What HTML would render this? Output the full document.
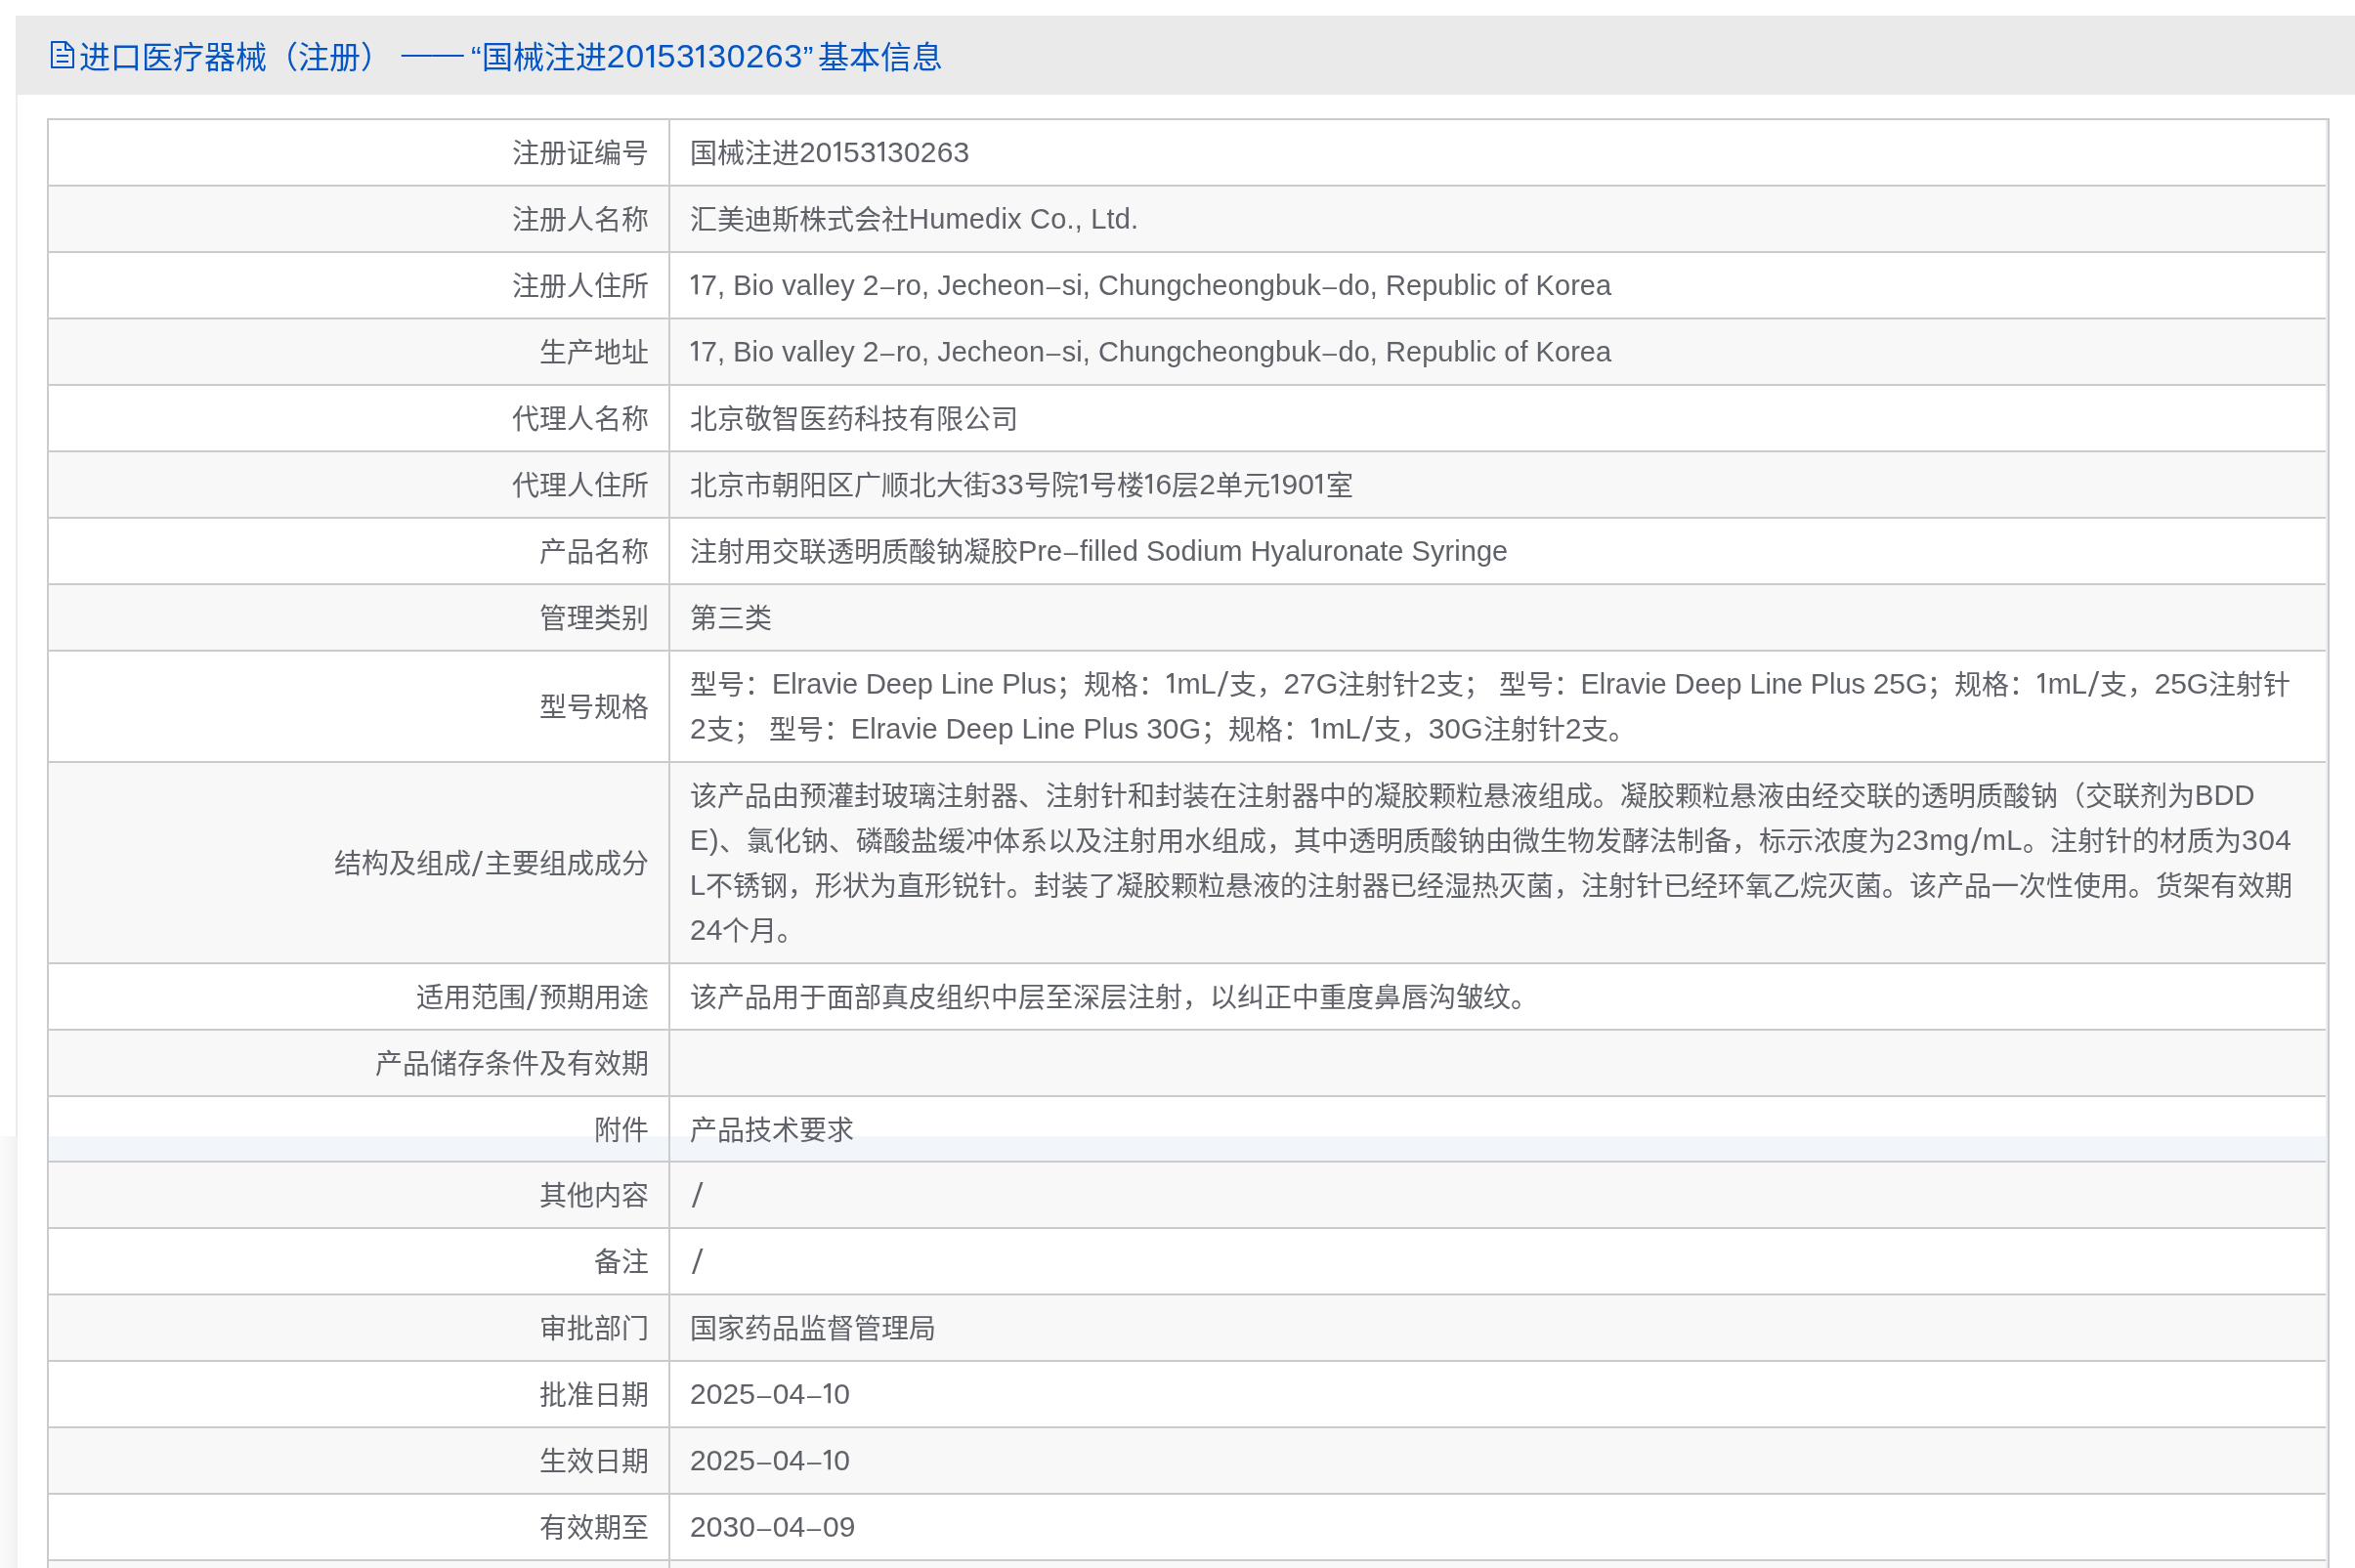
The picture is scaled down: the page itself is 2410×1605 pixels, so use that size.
<!DOCTYPE html><html lang="zh-CN"><head><meta charset="utf-8"><title>基本信息</title><style>
*{box-sizing:border-box;margin:0;padding:0}
html,body{width:2410px;height:1605px;overflow:hidden;background:#fff}
body{font-family:"Liberation Sans",sans-serif;color:#5f6269;font-size:28px;line-height:46px;position:relative}
.w{position:relative;width:2410px;height:1605px;overflow:hidden}
i{font-style:normal;position:relative;top:-1px;line-height:0}
b{display:inline-block;width:1em;font-weight:normal;text-align:justify;text-align-last:justify;white-space:nowrap;vertical-align:baseline}
.n{font-size:30px;top:-1px;letter-spacing:var(--r,0px)}.o{width:11.3px;height:20.2px;fill:currentColor;position:relative;top:-1.4px;vertical-align:baseline}.sl{width:12.9px;height:26.5px;vertical-align:-3.15px;position:relative;top:-.8px;fill:currentColor}.da{font-size:26px;top:-1.5px;margin:0 1.6px}.e{font-size:29px;top:-1px;letter-spacing:calc(.05px + var(--r,0px))}
.panel{position:absolute;left:16px;top:16px;width:2400px;height:1147px;border-left:2px solid #ececec}
.shade{position:absolute;left:0;top:1163px;width:18px;height:442px;background:linear-gradient(90deg,#fbfbfb 0,#f7f7f7 50%,#f2f2f2 88%,#efefef 100%)}
.hd{position:absolute;left:16px;top:16px;width:2394px;height:81px;background:#eaeaea;border-bottom:2px solid #e8ecf1}
.ico{position:absolute;left:52px;top:42px;width:24px;height:28px}
.tt{will-change:transform;position:absolute;left:81px;top:36px;height:46px;line-height:46px;font-size:32px;color:#0556c4;white-space:nowrap}
.tt .n{font-size:34px;letter-spacing:.55px}.tt .o{width:12.9px;height:23.1px}
.q{display:inline-block}.q1{width:18px;text-align:right}.q2{width:15px;text-align:left}
.tb{position:absolute;left:48px;top:121px;width:2336px;height:1484px;border-left:2px solid #cbcbcb;border-right:2px solid #cbcbcb}
.r{position:absolute;left:48px;width:2336px;border-top:2px solid #cbcbcb;will-change:transform}
.r.s{background:#f8f8f8}
.r.hv{background:linear-gradient(180deg,#fff 0,#fff 40px,#f2f6fa 40px)}
.l{position:absolute;left:2px;top:0;bottom:0;width:634px;display:flex;align-items:center;justify-content:flex-end;padding:4px 20.3px 0 0;white-space:nowrap}
.v{position:absolute;left:636px;top:0;bottom:0;width:1698px;border-left:2px solid #cbcbcb;padding:12px 0 8px 20px;white-space:nowrap}
.v div{height:46px}
.big{position:absolute;left:21.5px;top:19.6px}
.l .sl{margin:0 .6px}
.vl{position:absolute;left:684px;top:121px;width:2px;height:1484px;background:#cbcbcb}
.rl{position:absolute;left:2380px;top:123px;width:2px;height:1482px;background:#eceef6}
</style></head><body><div class="w">
<div class="panel"></div><div class="shade"></div><div class="hd"></div>
<svg class="ico" viewBox="0 0 24 28" fill="none" stroke="#0556c4" stroke-width="2" stroke-linejoin="round"><path d="M1 1H15.4L23 8.6V27H1Z"/><path d="M15 1V9H23"/><path d="M6 9H11M6 15H18M6 21H18"/></svg>
<div class="tt"><b style="width:10em">进口医疗器械（注册）</b><i class="e" style="font-size:33px;letter-spacing:.55px"> </i><span style="position:relative;top:-5px"><b style="width:2em">——</b></span><span class="q q1">“</span><b style="width:4em">国械注进</b><i class="n">20</i><svg class="o" viewBox="0 0 11.3 20.2"><path d="M5.6 0H8V20.2H5.35V3.2L1.6 5.7L.7 3.5Z"/></svg><i class="n">53</i><svg class="o" viewBox="0 0 11.3 20.2"><path d="M5.6 0H8V20.2H5.35V3.2L1.6 5.7L.7 3.5Z"/></svg><i class="n">30263</i><span class="q q2">”</span><b style="width:4em">基本信息</b></div>
<div class="r" style="top:121px;height:68px"><div class="l"><b style="width:5em">注册证编号</b></div><div class="v"><div id="v0_0" style="--r:0.182px"><b style="width:4em">国械注进</b><i class="n">20</i><svg class="o" viewBox="0 0 11.3 20.2"><path d="M5.6 0H8V20.2H5.35V3.2L1.6 5.7L.7 3.5Z"/></svg><i class="n">53</i><svg class="o" viewBox="0 0 11.3 20.2"><path d="M5.6 0H8V20.2H5.35V3.2L1.6 5.7L.7 3.5Z"/></svg><i class="n">30263</i></div></div></div>
<div class="r s" style="top:189px;height:68px"><div class="l"><b style="width:5em">注册人名称</b></div><div class="v"><div id="v1_0" style="--r:0.141px"><b style="width:8em">汇美迪斯株式会社</b><i class="e">Humedix Co., Ltd.</i></div></div></div>
<div class="r" style="top:257px;height:68px"><div class="l"><b style="width:5em">注册人住所</b></div><div class="v"><div id="v2_0" style="--r:-0.012px"><svg class="o" viewBox="0 0 11.3 20.2"><path d="M5.6 0H8V20.2H5.35V3.2L1.6 5.7L.7 3.5Z"/></svg><i class="n">7</i><i class="e">, Bio valley </i><i class="n">2</i><i class="da">–</i><i class="e">ro, Jecheon</i><i class="da">–</i><i class="e">si, Chungcheongbuk</i><i class="da">–</i><i class="e">do, Republic of Korea</i></div></div></div>
<div class="r s" style="top:325px;height:68px"><div class="l"><b style="width:4em">生产地址</b></div><div class="v"><div id="v3_0" style="--r:-0.012px"><svg class="o" viewBox="0 0 11.3 20.2"><path d="M5.6 0H8V20.2H5.35V3.2L1.6 5.7L.7 3.5Z"/></svg><i class="n">7</i><i class="e">, Bio valley </i><i class="n">2</i><i class="da">–</i><i class="e">ro, Jecheon</i><i class="da">–</i><i class="e">si, Chungcheongbuk</i><i class="da">–</i><i class="e">do, Republic of Korea</i></div></div></div>
<div class="r" style="top:393px;height:68px"><div class="l"><b style="width:5em">代理人名称</b></div><div class="v"><div id="v4_0"><b style="width:12em">北京敬智医药科技有限公司</b></div></div></div>
<div class="r s" style="top:461px;height:68px"><div class="l"><b style="width:5em">代理人住所</b></div><div class="v"><div id="v5_0" style="--r:0.200px"><b style="width:11em">北京市朝阳区广顺北大街</b><i class="n">33</i><b style="width:2em">号院</b><svg class="o" viewBox="0 0 11.3 20.2"><path d="M5.6 0H8V20.2H5.35V3.2L1.6 5.7L.7 3.5Z"/></svg><b style="width:2em">号楼</b><svg class="o" viewBox="0 0 11.3 20.2"><path d="M5.6 0H8V20.2H5.35V3.2L1.6 5.7L.7 3.5Z"/></svg><i class="n">6</i><b>层</b><i class="n">2</i><b style="width:2em">单元</b><svg class="o" viewBox="0 0 11.3 20.2"><path d="M5.6 0H8V20.2H5.35V3.2L1.6 5.7L.7 3.5Z"/></svg><i class="n">90</i><svg class="o" viewBox="0 0 11.3 20.2"><path d="M5.6 0H8V20.2H5.35V3.2L1.6 5.7L.7 3.5Z"/></svg><b>室</b></div></div></div>
<div class="r" style="top:529px;height:68px"><div class="l"><b style="width:4em">产品名称</b></div><div class="v"><div id="v6_0" style="--r:-0.005px"><b style="width:12em">注射用交联透明质酸钠凝胶</b><i class="e">Pre</i><i class="da">–</i><i class="e">filled Sodium Hyaluronate Syringe</i></div></div></div>
<div class="r s" style="top:597px;height:68px"><div class="l"><b style="width:4em">管理类别</b></div><div class="v"><div id="v7_0"><b style="width:3em">第三类</b></div></div></div>
<div class="r" style="top:665px;height:114px"><div class="l"><b style="width:4em">型号规格</b></div><div class="v"><div id="v8_0" style="--r:-0.147px"><b style="width:3em">型号：</b><i class="e">Elravie Deep Line Plus</i><b style="width:4em">；规格：</b><svg class="o" viewBox="0 0 11.3 20.2"><path d="M5.6 0H8V20.2H5.35V3.2L1.6 5.7L.7 3.5Z"/></svg><i class="e">mL</i><svg class="sl" viewBox="0 0 12.9 26.5"><path d="M9.6 0H12.2L3.3 26.5H.7Z"/></svg><b style="width:2em">支，</b><i class="n">27</i><i class="e">G</i><b style="width:3em">注射针</b><i class="n">2</i><b style="width:2em">支；</b><i class="e"> </i><b style="width:3em">型号：</b><i class="e">Elravie Deep Line Plus </i><i class="n">25</i><i class="e">G</i><b style="width:4em">；规格：</b><svg class="o" viewBox="0 0 11.3 20.2"><path d="M5.6 0H8V20.2H5.35V3.2L1.6 5.7L.7 3.5Z"/></svg><i class="e">mL</i><svg class="sl" viewBox="0 0 12.9 26.5"><path d="M9.6 0H12.2L3.3 26.5H.7Z"/></svg><b style="width:2em">支，</b><i class="n">25</i><i class="e">G</i><b style="width:3em">注射针</b></div><div id="v8_1" style="--r:-0.011px"><i class="n">2</i><b style="width:2em">支；</b><i class="e"> </i><b style="width:3em">型号：</b><i class="e">Elravie Deep Line Plus </i><i class="n">30</i><i class="e">G</i><b style="width:4em">；规格：</b><svg class="o" viewBox="0 0 11.3 20.2"><path d="M5.6 0H8V20.2H5.35V3.2L1.6 5.7L.7 3.5Z"/></svg><i class="e">mL</i><svg class="sl" viewBox="0 0 12.9 26.5"><path d="M9.6 0H12.2L3.3 26.5H.7Z"/></svg><b style="width:2em">支，</b><i class="n">30</i><i class="e">G</i><b style="width:3em">注射针</b><i class="n">2</i><b style="width:2em">支。</b></div></div></div>
<div class="r s" style="top:779px;height:206px"><div class="l"><b style="width:5em">结构及组成</b><svg class="sl" viewBox="0 0 12.9 26.5"><path d="M9.6 0H12.2L3.3 26.5H.7Z"/></svg><b style="width:6em">主要组成成分</b></div><div class="v"><div id="v9_0"><b style="width:55em">该产品由预灌封玻璃注射器、注射针和封装在注射器中的凝胶颗粒悬液组成。凝胶颗粒悬液由经交联的透明质酸钠（交联剂为</b><i class="e">BDD</i></div><div id="v9_1" style="--r:0.483px"><i class="e">E)</i><b style="width:43em">、氯化钠、磷酸盐缓冲体系以及注射用水组成，其中透明质酸钠由微生物发酵法制备，标示浓度为</b><i class="n">23</i><i class="e">mg</i><svg class="sl" viewBox="0 0 12.9 26.5"><path d="M9.6 0H12.2L3.3 26.5H.7Z"/></svg><i class="e">mL</i><b style="width:8em">。注射针的材质为</b><i class="n">304</i></div><div id="v9_2"><i class="e">L</i><b style="width:58em">不锈钢，形状为直形锐针。封装了凝胶颗粒悬液的注射器已经湿热灭菌，注射针已经环氧乙烷灭菌。该产品一次性使用。货架有效期</b></div><div id="v9_3"><i class="n">24</i><b style="width:3em">个月。</b></div></div></div>
<div class="r" style="top:985px;height:68px"><div class="l"><b style="width:4em">适用范围</b><svg class="sl" viewBox="0 0 12.9 26.5"><path d="M9.6 0H12.2L3.3 26.5H.7Z"/></svg><b style="width:4em">预期用途</b></div><div class="v"><div id="v10_0"><b style="width:31em">该产品用于面部真皮组织中层至深层注射，以纠正中重度鼻唇沟皱纹。</b></div></div></div>
<div class="r s" style="top:1053px;height:68px"><div class="l"><b style="width:10em">产品储存条件及有效期</b></div><div class="v"><div id="v11_0"></div></div></div>
<div class="r hv" style="top:1121px;height:68px"><div class="l"><b style="width:2em">附件</b></div><div class="v"><div id="v12_0"><b style="width:6em">产品技术要求</b></div></div></div>
<div class="r s" style="top:1188px;height:68px"><div class="l"><b style="width:4em">其他内容</b></div><div class="v"><svg class="big" width="12" height="26" viewBox="0 0 12 26"><path d="M8.9 0H11.5L2.6 26H0Z" fill="#5f6269"/></svg></div></div>
<div class="r" style="top:1256px;height:68px"><div class="l"><b style="width:2em">备注</b></div><div class="v"><svg class="big" width="12" height="26" viewBox="0 0 12 26"><path d="M8.9 0H11.5L2.6 26H0Z" fill="#5f6269"/></svg></div></div>
<div class="r s" style="top:1324px;height:68px"><div class="l"><b style="width:4em">审批部门</b></div><div class="v"><div id="v15_0"><b style="width:9em">国家药品监督管理局</b></div></div></div>
<div class="r" style="top:1392px;height:68px"><div class="l"><b style="width:4em">批准日期</b></div><div class="v"><div id="v16_0" style="--r:0.100px"><i class="n">2025</i><i class="da">–</i><i class="n">04</i><i class="da">–</i><svg class="o" viewBox="0 0 11.3 20.2"><path d="M5.6 0H8V20.2H5.35V3.2L1.6 5.7L.7 3.5Z"/></svg><i class="n">0</i></div></div></div>
<div class="r s" style="top:1460px;height:68px"><div class="l"><b style="width:4em">生效日期</b></div><div class="v"><div id="v17_0" style="--r:0.100px"><i class="n">2025</i><i class="da">–</i><i class="n">04</i><i class="da">–</i><svg class="o" viewBox="0 0 11.3 20.2"><path d="M5.6 0H8V20.2H5.35V3.2L1.6 5.7L.7 3.5Z"/></svg><i class="n">0</i></div></div></div>
<div class="r" style="top:1528px;height:68px"><div class="l"><b style="width:4em">有效期至</b></div><div class="v"><div id="v18_0" style="--r:0.080px"><i class="n">2030</i><i class="da">–</i><i class="n">04</i><i class="da">–</i><i class="n">09</i></div></div></div>
<div class="r s" style="top:1596px;height:68px"><div class="l"></div><div class="v"><div id="v19_0"></div></div></div>
<div class="tb"></div><div class="vl"></div><div class="rl"></div>
</div></body></html>
